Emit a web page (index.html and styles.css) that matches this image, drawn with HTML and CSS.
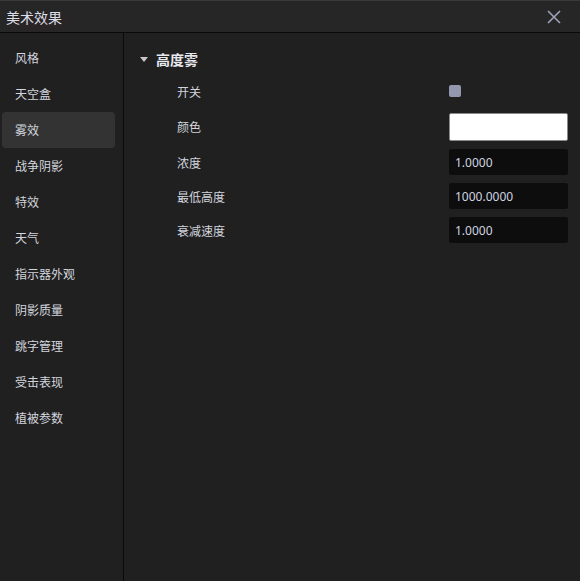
FILE: index.html
```html
<!DOCTYPE html>
<html lang="zh-CN">
<head>
    <meta charset="UTF-8">
    <title>美术效果</title>
    <link rel="stylesheet" href="styles.css">
</head>
<body>
    <div class="window">
        <div class="titlebar">
            <span class="title">美术效果</span>
            <button class="close" aria-label="关闭">
                <svg width="14" height="14" viewBox="0 0 14 14">
                    <path d="M1 1 L13 13 M13 1 L1 13" stroke="#9ea3b8" stroke-width="1.6" fill="none"/>
                </svg>
            </button>
        </div>
        <div class="main">
            <ul class="sidebar">
                <li>风格</li>
                <li>天空盒</li>
                <li class="active">雾效</li>
                <li>战争阴影</li>
                <li>特效</li>
                <li>天气</li>
                <li>指示器外观</li>
                <li>阴影质量</li>
                <li>跳字管理</li>
                <li>受击表现</li>
                <li>植被参数</li>
            </ul>
            <div class="content">
                <div class="section-head">
                    <span class="arrow"></span>
                    <span>高度雾</span>
                </div>
                <div class="row switch-row">
                    <span class="label">开关</span>
                    <div class="control"><span class="checkbox"></span></div>
                </div>
                <div class="row color-row">
                    <span class="label">颜色</span>
                    <div class="control"><span class="color-box"></span></div>
                </div>
                <div class="row">
                    <span class="label">浓度</span>
                    <div class="control"><input class="num" type="text" value="1.0000"></div>
                </div>
                <div class="row">
                    <span class="label">最低高度</span>
                    <div class="control"><input class="num" type="text" value="1000.0000"></div>
                </div>
                <div class="row">
                    <span class="label">衰减速度</span>
                    <div class="control"><input class="num" type="text" value="1.0000"></div>
                </div>
            </div>
        </div>
    </div>
</body>
</html>
```

FILE: styles.css
```css
body {
    margin: 0;
    background-color: #202020;
    font-family: "Noto Sans CJK SC", "Noto Sans", sans-serif;
    color: #d2d5de;
}
.window {
    width: 580px;
    height: 581px;
    display: flex;
    flex-direction: column;
    overflow: hidden;
}
.titlebar {
    height: 31px;
    flex: none;
    display: flex;
    align-items: center;
    justify-content: space-between;
    padding: 0 19px 0 6px;
    border-top: 1px solid #3a3a3a;
    border-bottom: 1px solid #0a0a0a;
    background: radial-gradient(ellipse 40px 12px at 40px 22px, rgba(80,20,30,0.15), transparent),
                #262626;
}
.title {
    font-size: 14px;
    color: #dcdfe8;
    margin-top: 1px;
}
.close {
    background: none;
    border: none;
    padding: 0;
    width: 14px;
    height: 14px;
    cursor: pointer;
}
.main {
    flex: 1;
    display: flex;
}
.sidebar {
    list-style: none;
    margin: 0;
    width: 121px;
    padding: 7px 0 0 2px;
    border-right: 1px solid #0a0a0a;
}
.sidebar li {
    width: 100px;
    height: 36px;
    line-height: 36px;
    padding-left: 13px;
    font-size: 12px;
    border-radius: 4px;
    cursor: pointer;
}
.sidebar li.active {
    background-color: #333333;
}
.content {
    flex: 1;
    padding: 11px 12px 0 16px;
}
.section-head {
    height: 30px;
    display: flex;
    align-items: center;
    font-size: 14px;
    font-weight: bold;
    color: #e6e8ee;
}
.arrow {
    width: 0;
    height: 0;
    border-left: 4px solid transparent;
    border-right: 4px solid transparent;
    border-top: 5px solid #c8c8c8;
    margin-right: 8px;
}
.row {
    height: 34px;
    display: flex;
    align-items: center;
    justify-content: space-between;
    padding-left: 37px;
}
.row.color-row {
    height: 37px;
}
.label {
    font-size: 12px;
}
.control {
    width: 119px;
    display: flex;
    align-items: center;
}
.checkbox {
    width: 12px;
    height: 12px;
    border-radius: 2px;
    background-color: #9498ae;
}
.color-box {
    width: 117px;
    height: 26px;
    border: 1px solid #8a8a8a;
    border-radius: 2px;
    background-color: #ffffff;
}
.num {
    width: 100%;
    height: 26px;
    box-sizing: border-box;
    border: none;
    border-radius: 2px;
    padding: 0 6px;
    background-color: #0d0d0d;
    color: #d0d4e0;
    font-family: "Noto Sans", sans-serif;
    font-size: 12px;
    outline: none;
}
```
